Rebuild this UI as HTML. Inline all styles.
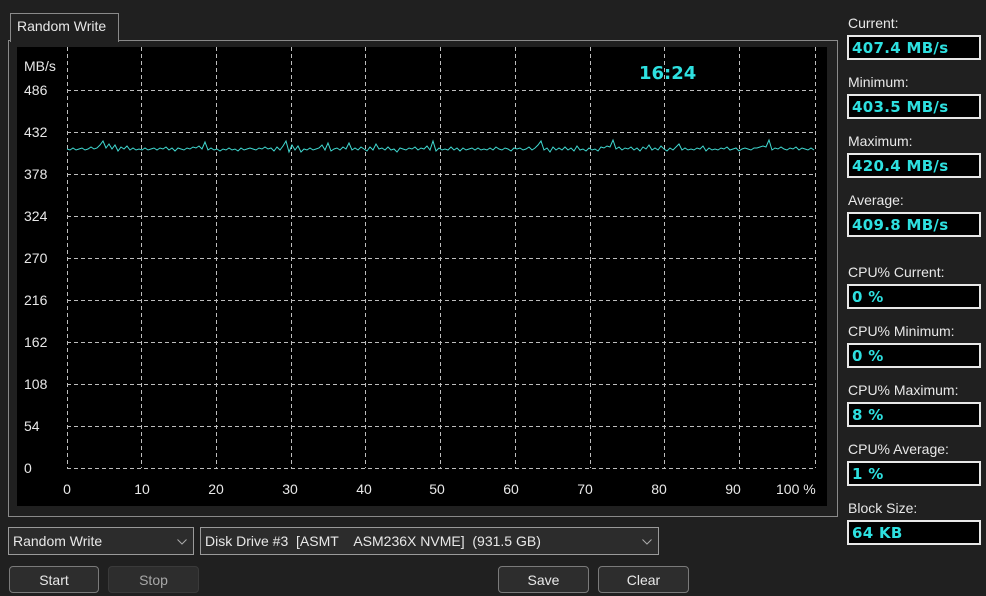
<!DOCTYPE html>
<html><head><meta charset="utf-8"><style>
*{box-sizing:border-box;margin:0;padding:0}
body{width:986px;height:596px;background:#202020;font-family:"Liberation Sans",sans-serif;position:relative;overflow:hidden;color:#e8e8e8}
.abs{position:absolute}
.tab{left:10px;top:13px;width:109px;height:29px;border:1px solid #8a8a8a;border-bottom:none;background:#202020;font-size:14px;padding:4px 0 0 6px;z-index:2}
.panel{left:8px;top:40px;width:830px;height:477px;border:1px solid #8a8a8a}
.chart{left:17px;top:47px;width:810px;height:459px;background:#000}
.lbl{font-size:14px;color:#e8e8e8;left:848px}
.box{left:847px;width:134px;height:25px;border:2px solid #e8e8e8;background:#000;color:#2ee0e0;font-family:"DejaVu Sans",sans-serif;font-weight:bold;font-size:15px;padding:2px 0 0 3px;letter-spacing:0.3px}
.combo{height:28px;border:1px solid #9a9a9a;background:#2c2c2c;font-size:14px;padding:5px 0 0 4px}
.combo svg{position:absolute;right:6px;top:11px}
.btn{height:27px;border:1px solid #7a7a7a;border-radius:4px;background:#2d2d2d;font-size:14px;text-align:center;padding-top:5px}
</style></head><body>
<div class="abs tab">Random Write</div>
<div class="abs panel"></div>
<div class="abs chart"></div>
<svg class="abs" style="left:0;top:0" width="986" height="596" xmlns="http://www.w3.org/2000/svg">
<g stroke="#bdbdbd" stroke-width="1" stroke-dasharray="4,3" fill="none">
<path d="M67.5 47V468M141.5 47V468M216.5 47V468M291.5 47V468M365.5 47V468M440.5 47V468M515.5 47V468M590.5 47V468M664.5 47V468M739.5 47V468M815.5 47V468"/>
<path d="M67 90.5H816M67 132.5H816M67 174.5H816M67 216.5H816M67 258.5H816M67 300.5H816M67 342.5H816M67 384.5H816M67 426.5H816M67 468.5H816"/>
</g>
<polyline fill="none" stroke="#40d8d0" stroke-width="1" points="67,149 70,150 73,148 76,150 79,149 82,148 85,150 88,149 91,147 94,149 97,148 100,145 103,141 106,148 109,144 112,149 115,145 118,151 121,147 124,149 127,146 130,150 133,148 136,150 139,149 142,150 145,148 148,150 151,149 154,148 157,150 160,148 163,149 166,147 169,150 172,148 175,151 178,148 181,149 184,150 187,148 190,149 193,147 196,148 199,146 202,149 205,142 208,150 211,148 214,150 217,149 220,151 223,149 226,150 229,148 232,150 235,149 238,151 241,148 244,150 247,149 250,148 253,149 256,150 259,148 262,149 265,147 268,149 271,148 274,151 277,147 280,150 283,146 286,141 289,152 292,145 295,150 298,146 301,152 304,149 307,150 310,148 313,150 316,149 319,148 322,145 325,150 328,143 331,151 334,149 337,148 340,150 343,147 346,149 349,143 352,150 355,148 358,150 361,147 364,149 367,151 370,147 373,150 376,144 379,149 382,148 385,150 388,147 391,150 394,149 397,152 400,148 403,149 406,150 409,148 412,149 415,147 418,150 421,148 424,149 427,146 430,150 433,141 436,151 439,148 442,150 445,149 448,150 451,147 454,150 457,148 460,151 463,148 466,150 469,149 472,148 475,150 478,148 481,150 484,149 487,150 490,148 493,150 496,147 499,149 502,150 505,148 508,149 511,151 514,148 517,149 520,148 523,150 526,149 529,147 532,150 535,148 538,145 541,141 544,150 547,148 550,152 553,147 556,150 559,148 562,150 565,147 568,150 571,148 574,151 577,146 580,150 583,149 586,151 589,148 592,150 595,149 598,151 601,147 604,148 607,146 610,147 613,140 616,149 619,147 622,150 625,148 628,149 631,147 634,150 637,148 640,151 643,147 646,149 649,145 652,150 655,148 658,150 661,146 664,149 667,151 670,148 673,150 676,147 679,144 682,150 685,148 688,150 691,149 694,150 697,148 700,149 703,146 706,151 709,148 712,150 715,149 718,150 721,148 724,149 727,147 730,150 733,149 736,148 739,151 742,149 745,148 748,149 751,150 754,148 757,148 760,147 763,146 766,147 769,140 772,150 775,148 778,149 781,147 784,149 787,150 790,148 793,149 796,147 799,150 802,148 805,149 808,150 811,148 814,150"/>
<g fill="#e8e8e8" font-family="Liberation Sans,sans-serif" font-size="14">
<text x="24" y="71">MB/s</text>
<text x="24" y="95">486</text><text x="24" y="137">432</text><text x="24" y="179">378</text><text x="24" y="221">324</text><text x="24" y="263">270</text><text x="24" y="305">216</text><text x="24" y="347">162</text><text x="24" y="389">108</text><text x="24" y="431">54</text><text x="24" y="473">0</text>
<g text-anchor="middle"><text x="67" y="494">0</text><text x="142" y="494">10</text><text x="216" y="494">20</text><text x="290" y="494">30</text><text x="364" y="494">40</text><text x="437" y="494">50</text><text x="511" y="494">60</text><text x="585" y="494">70</text><text x="659" y="494">80</text><text x="733" y="494">90</text></g>
<text x="776" y="494">100 %</text>
</g>
<text x="639" y="79" fill="#2ee0e0" font-family="DejaVu Sans,sans-serif" font-weight="bold" font-size="18">16:24</text>
</svg>

<div class="abs lbl" style="top:15px">Current:</div><div class="abs box" style="top:35px">407.4 MB/s</div>
<div class="abs lbl" style="top:74px">Minimum:</div><div class="abs box" style="top:94px">403.5 MB/s</div>
<div class="abs lbl" style="top:133px">Maximum:</div><div class="abs box" style="top:153px">420.4 MB/s</div>
<div class="abs lbl" style="top:192px">Average:</div><div class="abs box" style="top:212px">409.8 MB/s</div>
<div class="abs lbl" style="top:264px">CPU% Current:</div><div class="abs box" style="top:284px">0 %</div>
<div class="abs lbl" style="top:323px">CPU% Minimum:</div><div class="abs box" style="top:343px">0 %</div>
<div class="abs lbl" style="top:382px">CPU% Maximum:</div><div class="abs box" style="top:402px">8 %</div>
<div class="abs lbl" style="top:441px">CPU% Average:</div><div class="abs box" style="top:461px">1 %</div>
<div class="abs lbl" style="top:500px">Block Size:</div><div class="abs box" style="top:520px">64 KB</div>

<div class="abs combo" style="left:8px;top:527px;width:186px">Random Write<svg width="10" height="6"><path d="M0.5 0.5L5 5L9.5 0.5" stroke="#aaa" fill="none"/></svg></div>
<div class="abs combo" style="left:200px;top:527px;width:459px;white-space:pre">Disk Drive #3  [ASMT    ASM236X NVME]  (931.5 GB)<svg width="10" height="6"><path d="M0.5 0.5L5 5L9.5 0.5" stroke="#aaa" fill="none"/></svg></div>
<div class="abs btn" style="left:9px;top:566px;width:90px">Start</div>
<div class="abs btn" style="left:108px;top:566px;width:91px;border-color:#3a3a3a;color:#a8a8a8">Stop</div>
<div class="abs btn" style="left:498px;top:566px;width:91px">Save</div>
<div class="abs btn" style="left:598px;top:566px;width:91px">Clear</div>
</body></html>
